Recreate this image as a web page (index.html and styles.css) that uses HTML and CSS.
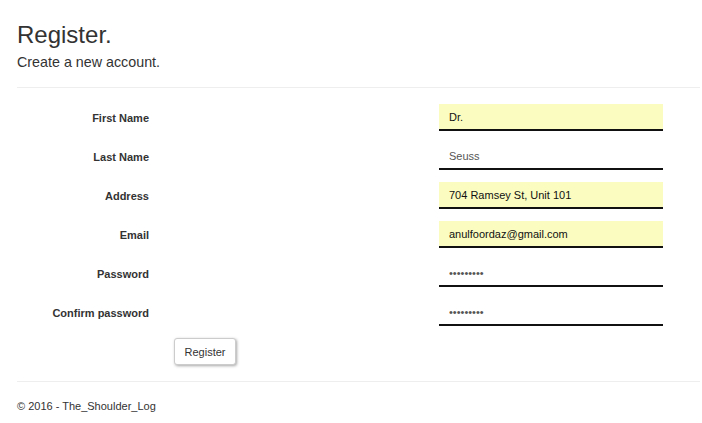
FILE: index.html
```html
<!DOCTYPE html>
<html lang="en">
<head>
<meta charset="utf-8">
<title>Register</title>
<link rel="stylesheet" href="styles.css">
</head>
<body>
<div class="container">
  <h2 class="title">Register.</h2>
  <h4 class="subtitle">Create a new account.</h4>
  <hr class="rule">
  <form class="form">
    <div class="row">
      <label class="label" for="fn">First Name</label>
      <input class="field autofill" id="fn" type="text" value="Dr.">
    </div>
    <div class="row">
      <label class="label" for="ln">Last Name</label>
      <input class="field" id="ln" type="text" value="Seuss">
    </div>
    <div class="row">
      <label class="label" for="ad">Address</label>
      <input class="field autofill" id="ad" type="text" value="704 Ramsey St, Unit 101">
    </div>
    <div class="row">
      <label class="label" for="em">Email</label>
      <input class="field autofill" id="em" type="text" value="anulfoordaz@gmail.com">
    </div>
    <div class="row">
      <label class="label" for="pw">Password</label>
      <input class="field" id="pw" type="password" value="123456789">
    </div>
    <div class="row">
      <label class="label" for="cp">Confirm password</label>
      <input class="field" id="cp" type="password" value="123456789">
    </div>
    <div class="actions">
      <button class="btn" type="button">Register</button>
    </div>
  </form>
  <hr class="rule footer-rule">
  <footer class="footer">© 2016 - The_Shoulder_Log</footer>
</div>
</body>
</html>
```

FILE: styles.css
```css
html, body {
  margin: 0;
  padding: 0;
  background: #fff;
}
body {
  font-family: "Liberation Sans", Arial, Helvetica, sans-serif;
  color: #333;
  font-size: 11px;
  line-height: 16px;
}
.container {
  padding: 0 2px 0 17px;
}
.title {
  margin: 22px 0 0;
  font-size: 24px;
  font-weight: normal;
  line-height: 26px;
  color: #333;
}
.subtitle {
  margin: 4px 0 0;
  font-size: 14.3px;
  font-weight: normal;
  line-height: 20px;
  color: #333;
}
.rule {
  border: 0;
  border-top: 1px solid #eee;
  margin: 15px 0 16px;
  height: 0;
}
.form {
  margin: 0;
}
.row {
  display: flex;
  align-items: center;
  height: 27px;
  margin-bottom: 12px;
}
.label {
  width: 132px;
  text-align: right;
  font-weight: bold;
  font-size: 11px;
  color: #333;
}
.field {
  box-sizing: border-box;
  margin-left: 290px;
  width: 224px;
  height: 27px;
  padding: 0 10px;
  border: 0;
  border-bottom: 2px solid #111;
  border-radius: 0;
  background: #fff;
  font-family: "Liberation Sans", Arial, sans-serif;
  font-size: 11px;
  color: #555;
  outline: none;
}
.field.autofill {
  background: #fafcc0;
  color: #111;
}
.actions {
  margin-left: 157px;
}
.btn {
  box-sizing: border-box;
  width: 62px;
  height: 27px;
  padding: 0;
  border: 1px solid #ccc;
  border-radius: 3px;
  background: #fff;
  box-shadow: 1px 1px 3px rgba(0, 0, 0, 0.35);
  font-family: "Liberation Sans", Arial, sans-serif;
  font-size: 11px;
  color: #333;
}
.footer-rule {
  margin: 16px 0 16px;
}
.footer {
  font-size: 11px;
  line-height: 16px;
  color: #333;
}
```
